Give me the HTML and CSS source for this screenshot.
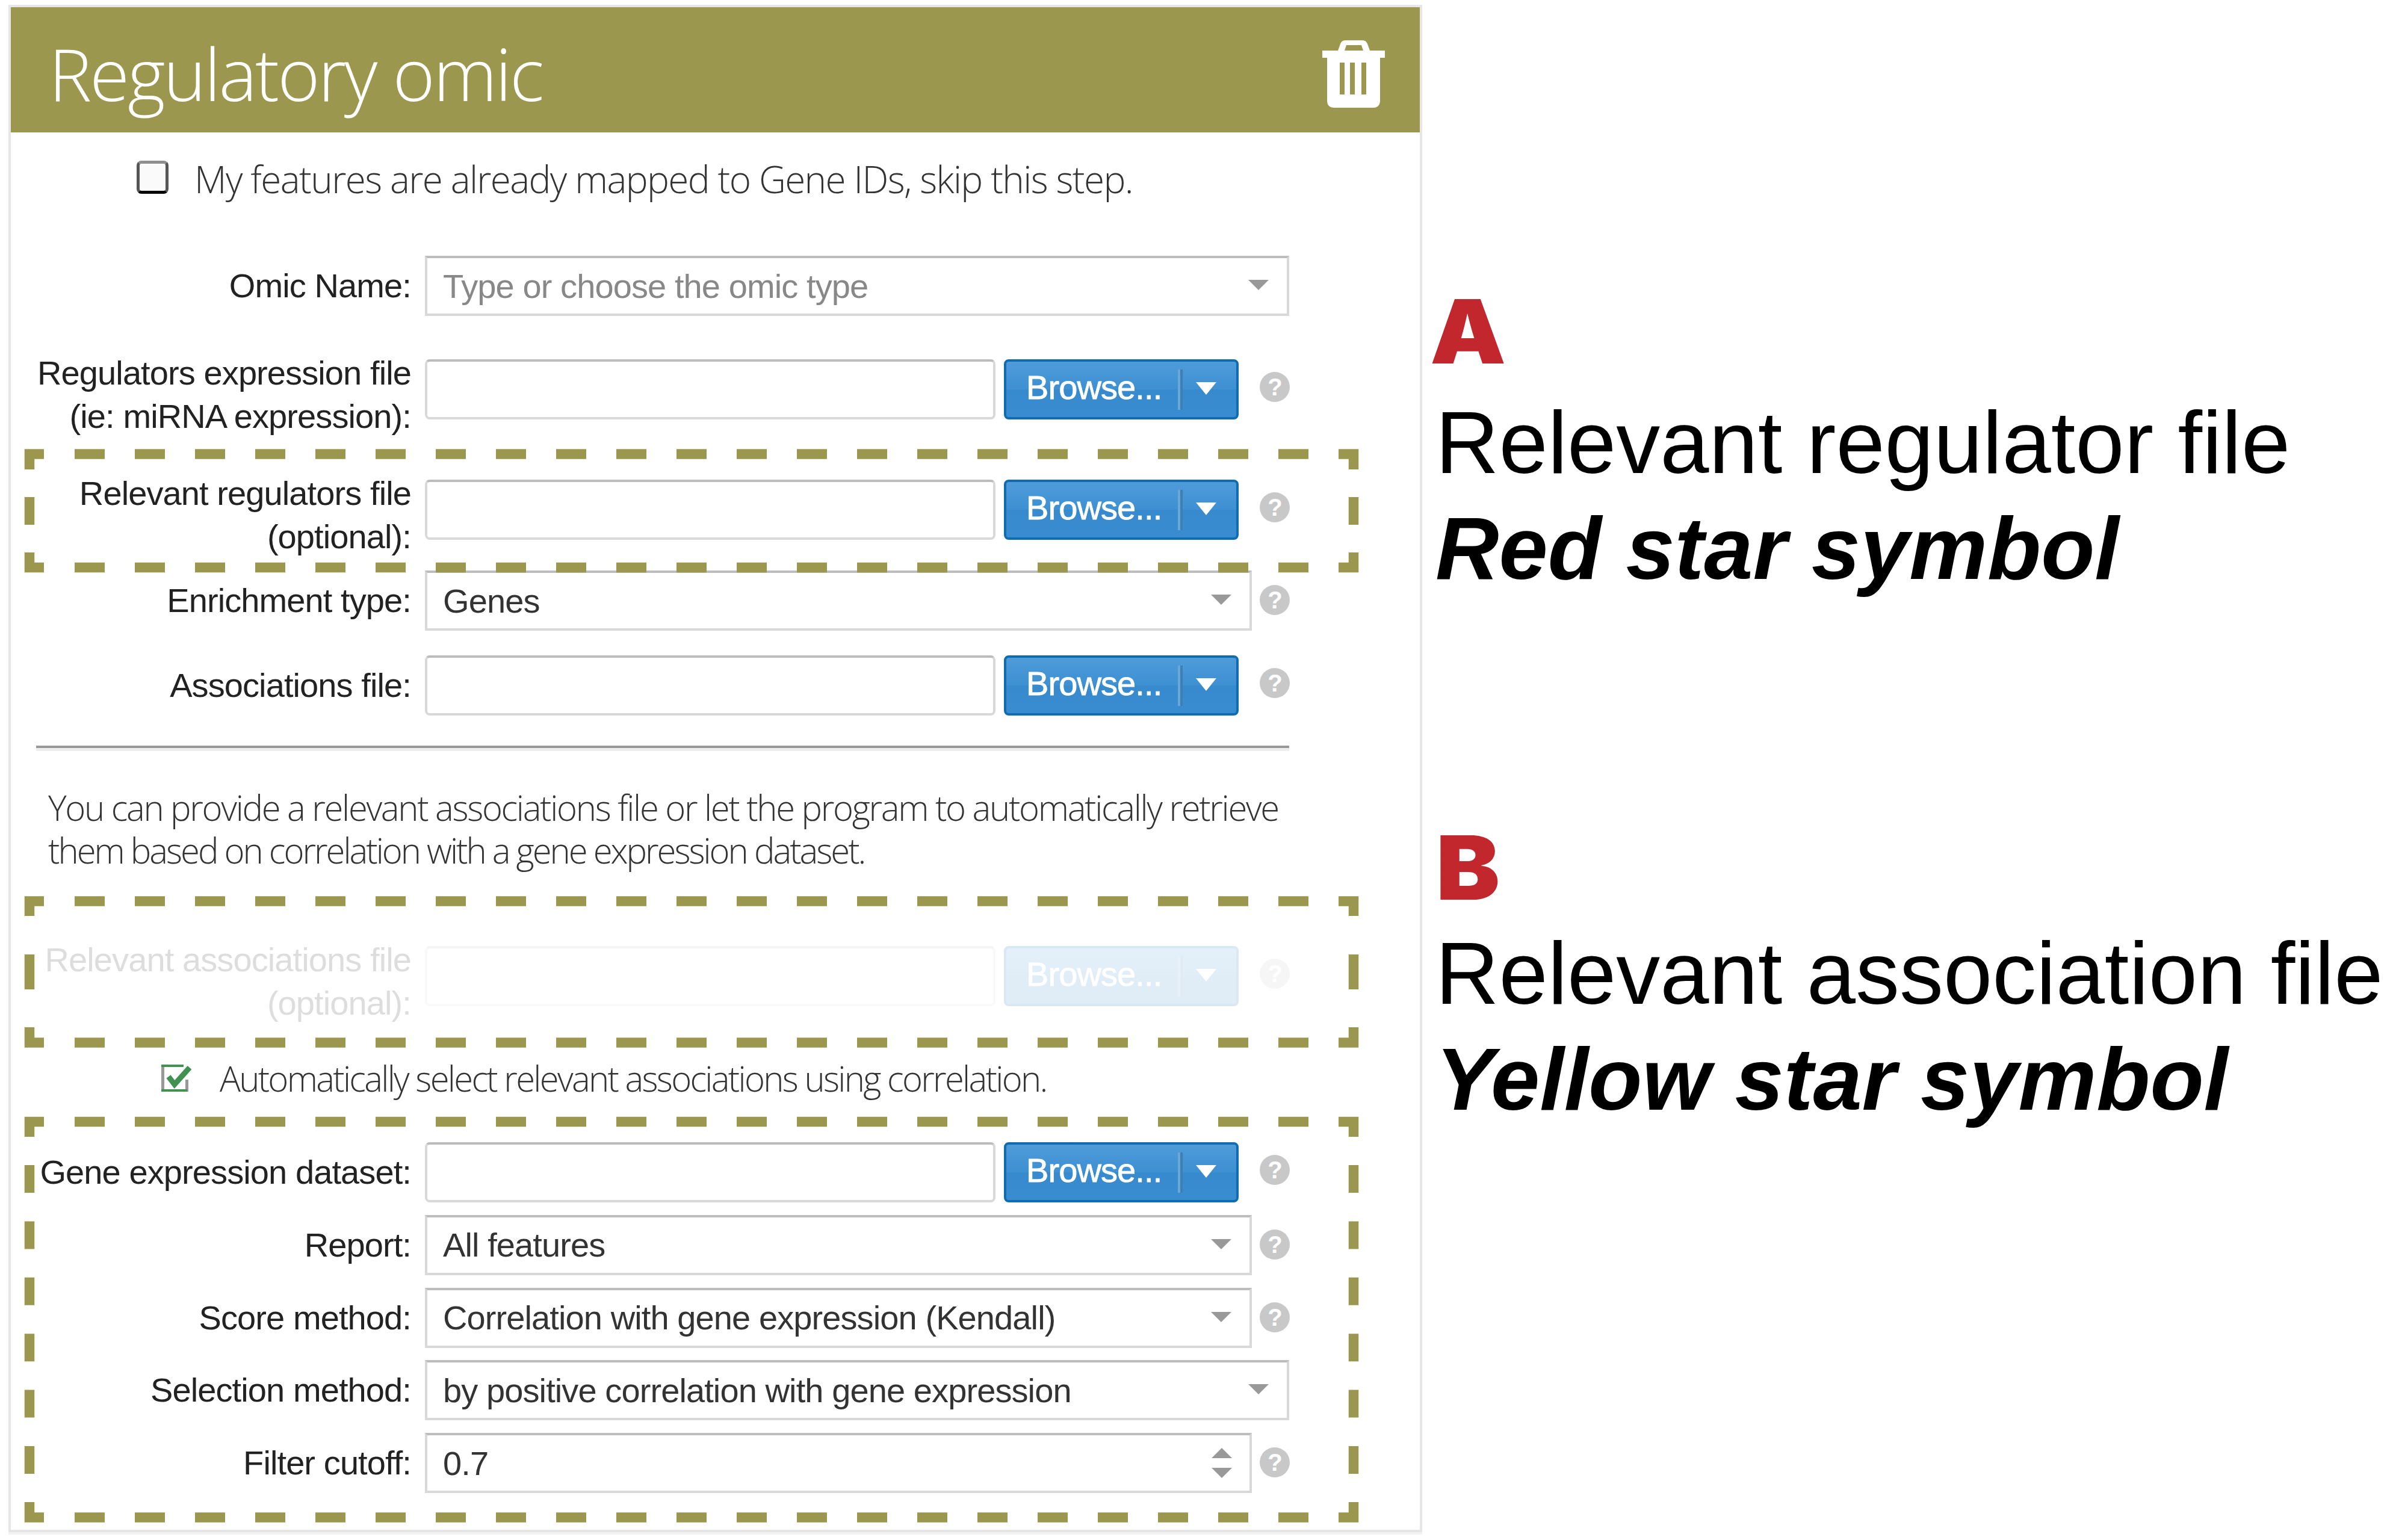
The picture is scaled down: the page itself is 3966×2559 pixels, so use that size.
FILE: index.html
```html
<!DOCTYPE html>
<html lang="en">
<head>
    <meta charset="UTF-8">
    <title>Regulatory omic</title>
    <link rel="stylesheet" href="styles.css">
</head>
<body>
<div class="page">

  <div class="panel">
    <div class="panel-head">
      <span class="panel-title">Regulatory omic</span>
      <svg class="trash" width="104" height="112" viewBox="0 0 104 112">
        <path fill="#fff" fill-rule="evenodd" d="M0 17H26L30 6Q32 0 38 0H67Q73 0 75 6L79 17H104V29H96V100Q96 112 84 112H20Q8 112 8 100V29H0ZM37 17H68L65 8H40Z"/>
        <path fill="#9c974e" d="M29 37H37V90H29ZM46 37H54V90H46ZM65 37H73V90H65Z"/>
      </svg>
    </div>

    <div class="check-row skip-row">
      <span class="checkbox"></span>
      <span class="check-text">My features are already mapped to Gene IDs, skip this step.</span>
    </div>

    <!-- omic name -->
    <div class="row omic-row">
      <div class="label">Omic Name:</div>
      <div class="select wide placeholder">Type or choose the omic type<span class="caret"></span></div>
    </div>

    <div class="row regulators-row">
      <div class="label two-lines">Regulators expression file<br>(ie: miRNA expression):</div>
      <div class="file-input"></div>
      <div class="browse"><span class="browse-text">Browse...</span><span class="browse-sep"></span><span class="browse-caret"></span></div>
      <div class="help">?</div>
    </div>

    <div class="row relevant-row">
      <div class="label two-lines">Relevant regulators file<br>(optional):</div>
      <div class="file-input"></div>
      <div class="browse"><span class="browse-text">Browse...</span><span class="browse-sep"></span><span class="browse-caret"></span></div>
      <div class="help">?</div>
    </div>

    <div class="row enrichment-row">
      <div class="label">Enrichment type:</div>
      <div class="select">Genes<span class="caret"></span></div>
      <div class="help">?</div>
    </div>

    <div class="row associations-row">
      <div class="label">Associations file:</div>
      <div class="file-input"></div>
      <div class="browse"><span class="browse-text">Browse...</span><span class="browse-sep"></span><span class="browse-caret"></span></div>
      <div class="help">?</div>
    </div>

    <div class="divider"></div>

    <p class="intro"><span class="intro-first">You can provide a relevant associations file or let the program to automatically retrieve</span><br>them based on correlation with a gene expression dataset.</p>

    <!-- disabled while the automatic option is checked -->
    <div class="row faded-row">
      <div class="label two-lines">Relevant associations file<br>(optional):</div>
      <div class="file-input"></div>
      <div class="browse"><span class="browse-text">Browse...</span><span class="browse-sep"></span><span class="browse-caret"></span></div>
      <div class="help">?</div>
    </div>

    <div class="check-row auto-row">
      <svg class="checked" width="60" height="45" viewBox="0 0 60 45">
        <path fill="#999" d="M5 0H10V45H5ZM45 25H50V45H45Z"/>
        <path fill="#3f9250" d="M5 0H42V4H5ZM5 41H48V45H5Z"/>
        <path fill="none" stroke="#3f9250" stroke-width="9" d="M17 20L27 33L52 5"/>
      </svg>
      <span class="check-text">Automatically select relevant associations using correlation.</span>
    </div>

    <div class="row gene-row">
      <div class="label">Gene expression dataset:</div>
      <div class="file-input"></div>
      <div class="browse"><span class="browse-text">Browse...</span><span class="browse-sep"></span><span class="browse-caret"></span></div>
      <div class="help">?</div>
    </div>

    <div class="row tight-row">
      <div class="label">Report:</div>
      <div class="select">All features<span class="caret"></span></div>
      <div class="help">?</div>
    </div>

    <div class="row tight-row">
      <div class="label">Score method:</div>
      <div class="select">Correlation with gene expression (Kendall)<span class="caret"></span></div>
      <div class="help">?</div>
    </div>

    <div class="row tight-row">
      <div class="label">Selection method:</div>
      <div class="select wide">by positive correlation with gene expression<span class="caret"></span></div>
    </div>

    <div class="row tight-row">
      <div class="label">Filter cutoff:</div>
      <div class="select">0.7<span class="spinner"><span class="spin-up"></span><span class="spin-down"></span></span></div>
      <div class="help">?</div>
    </div>
  </div>

  <div class="notes">
    <div class="note-letter">A</div>
    <div class="note-line first-line">Relevant regulator file</div>
    <div class="note-line note-em">Red star symbol</div>
    <div class="note-letter letter-b">B</div>
    <div class="note-line first-line">Relevant association file</div>
    <div class="note-line note-em">Yellow star symbol</div>
  </div>

  <!-- dashed highlight boxes, drawn over the form -->
  <svg class="dash-layer" width="3966" height="2559" viewBox="0 0 3966 2559" fill="none" stroke="#9c974e" stroke-width="16.5">
    <g>
      <path d="M49 780V754.5H73M2224 754.5H2249V780"/>
      <path d="M124 754.5H2174" stroke-dasharray="50 50"/>
      <path d="M49 826V872M2249 826V872"/>
      <path d="M49 918V943H73M2224 943H2249V918"/>
      <path d="M124 943H2174" stroke-dasharray="50 50"/>
    </g>
    <g>
      <path d="M49 1522V1497.5H73M2224 1497.5H2249V1522"/>
      <path d="M124 1497.5H2174" stroke-dasharray="50 50"/>
      <path d="M49 1586V1644M2249 1586V1644"/>
      <path d="M49 1707V1732.5H73M2224 1732.5H2249V1707"/>
      <path d="M124 1732.5H2174" stroke-dasharray="50 50"/>
    </g>
    <g>
      <path d="M49 1889V1864H73M2224 1864H2249V1889"/>
      <path d="M124 1864H2174" stroke-dasharray="50 50"/>
      <path d="M49 1936V2449M2249 1936V2449" stroke-dasharray="46 47.4"/>
      <path d="M49 2496V2521.5H73M2224 2521.5H2249V2496"/>
      <path d="M124 2521.5H2174" stroke-dasharray="50 50"/>
    </g>
  </svg>
</div>
</body>
</html>
```
FILE: styles.css
```css
body {
    margin: 0;
    background-color: #fff;
    font-family: 'Liberation Sans', Arial, sans-serif;
}

.page {
    position: relative;
    display: flex;
    align-items: flex-start;
    width: 3966px;
    height: 2559px;
    overflow: hidden;
}

/* panel */
.panel {
    box-sizing: border-box;
    width: 2349px;
    height: 2538px;
    margin: 8px 0 0 14px;
    border: 4px solid #e6e6e6;
    box-shadow: 0 4px 0 #f2f2f2;
}

.panel-head {
    display: flex;
    align-items: center;
    justify-content: space-between;
    height: 208px;
    padding: 0 58px 0 63px;
    box-sizing: border-box;
    background-color: #9c974e;
    color: #fff;
}

.panel-title {
    font-family: 'Open Sans', sans-serif;
    font-weight: 300;
    font-size: 120px;
    letter-spacing: -3px;
    margin-top: 10px;
}

.trash {
    margin-top: 14px;
}

/* check rows */
.check-row {
    display: flex;
    align-items: center;
    font-family: 'Open Sans', sans-serif;
    font-weight: 300;
    color: #333;
}

.skip-row {
    height: 55px;
    margin: 47px 0 0 209px;
    font-size: 62px;
    letter-spacing: -1.6px;
}

.skip-row .check-text {
    margin-top: 4px;
}

.auto-row {
    height: 45px;
    margin: 97px 0 0 245px;
    font-size: 58px;
    letter-spacing: -2.7px;
}

.checkbox {
    box-sizing: border-box;
    width: 53px;
    height: 55px;
    margin-right: 43px;
    border: 5px solid #555;
    border-top-color: #8e8e8e;
    border-bottom-color: #000;
    border-radius: 8px;
    background-color: #fafafa;
}

.checked {
    margin-right: 42px;
}

/* form rows */
.row {
    display: flex;
    align-items: center;
    height: 100px;
    font-size: 56px;
    letter-spacing: -0.9px;
    color: #222;
}

.omic-row { margin-top: 103px; }
.regulators-row { margin-top: 72px; }
.relevant-row { margin-top: 100px; }
.enrichment-row { margin-top: 51px; }
.associations-row { margin-top: 41px; }
.faded-row { margin-top: 124px; opacity: 0.15; }
.gene-row { margin-top: 84px; }
.tight-row { margin-top: 20.75px; }

.label {
    flex: none;
    width: 665px;
    margin-right: 23px;
    text-align: right;
    line-height: 72px;
}

.label.two-lines {
    align-self: flex-start;
    margin-top: -13px;
}

.select {
    position: relative;
    box-sizing: border-box;
    display: flex;
    align-items: center;
    width: 1374px;
    height: 100px;
    padding-left: 26px;
    border: 4px solid #d9d9d9;
    border-top-color: #bdbdbd;
    background-color: #fff;
    color: #333;
}

.select.wide {
    width: 1436px;
}

.placeholder {
    color: #888;
}

.caret {
    position: absolute;
    right: 30px;
    top: 36px;
    border-left: 17px solid transparent;
    border-right: 17px solid transparent;
    border-top: 17px solid #999;
}

.spinner {
    position: absolute;
    right: 29px;
    top: 21px;
}

.spin-up,
.spin-down {
    display: block;
    border-left: 17px solid transparent;
    border-right: 17px solid transparent;
}

.spin-up {
    border-bottom: 17px solid #999;
    margin-bottom: 16px;
}

.spin-down {
    border-top: 17px solid #999;
}

.file-input {
    box-sizing: border-box;
    width: 948px;
    height: 100px;
    border: 4px solid #d9d9d9;
    border-top-color: #bdbdbd;
    border-radius: 8px;
    background-color: #fff;
}

.browse {
    box-sizing: border-box;
    display: flex;
    align-items: center;
    width: 390px;
    height: 100px;
    margin-left: 14px;
    padding-left: 33px;
    border: 4px solid #0f6cb0;
    border-radius: 8px;
    background: linear-gradient(#4f9bd9, #3d90d2 50%, #388ace 50%, #388ccf);
    color: #fff;
}

.browse-text {
    margin-top: -8px;
    -webkit-text-stroke: 0.8px #fff;
}

.browse-sep {
    width: 4px;
    height: 67px;
    margin-left: 27px;
    border-right: 4px solid #3c7fb5;
    background-color: #6aa6d8;
}

.browse-caret {
    margin-left: 22px;
    margin-top: -4px;
    border-left: 17px solid transparent;
    border-right: 17px solid transparent;
    border-top: 21px solid #fff;
}

.help {
    width: 50px;
    height: 50px;
    margin: -2px 0 0 13px;
    border-radius: 50%;
    background-color: #c8c8c8;
    color: #fff;
    font-size: 40px;
    font-weight: bold;
    line-height: 50px;
    text-align: center;
}

.browse + .help {
    margin-top: -8px;
    margin-left: 35px;
}

.divider {
    margin: 50px 0 0 42px;
    width: 2082px;
    height: 4px;
    background-color: #999;
    border-bottom: 5px solid #eee;
}

.intro {
    margin: 58px 0 0 62px;
    font-family: 'Open Sans', sans-serif;
    font-weight: 300;
    font-size: 58px;
    letter-spacing: -3px;
    line-height: 71px;
    color: #333;
}

.intro-first {
    letter-spacing: -2.3px;
}

/* side notes */
.notes {
    margin-left: 22px;
    padding-top: 476px;
    color: #000;
    white-space: nowrap;
}

.note-letter {
    font-family: Inter, sans-serif;
    font-weight: 900;
    font-size: 147px;
    line-height: 150px;
    color: #c1272d;
    margin-left: -9px;
    transform: scaleX(1.08);
    transform-origin: left center;
}

.letter-b {
    margin-top: 367px;
    margin-left: 1px;
}

.note-line {
    font-size: 146px;
    line-height: 176px;
}

.first-line {
    margin-top: 22px;
}

.letter-b + .first-line {
    margin-top: 13px;
}

.note-em {
    font-weight: bold;
    font-style: italic;
}

.dash-layer {
    position: absolute;
    left: 0;
    top: 0;
}
```
